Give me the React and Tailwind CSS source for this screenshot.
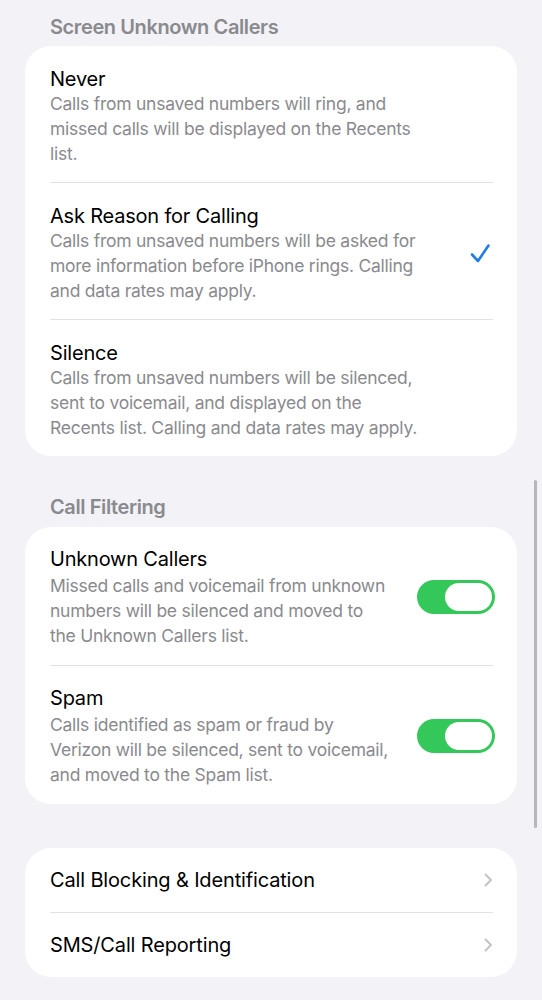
import React from 'react';

const FONT = { fontFamily: 'Inter, "Noto Sans", sans-serif' };

const screeningOptions = [
  {
    title: 'Never',
    lines: [
      'Calls from unsaved numbers will ring, and',
      'missed calls will be displayed on the Recents',
      'list.',
    ],
  },
  {
    title: 'Ask Reason for Calling',
    lines: [
      'Calls from unsaved numbers will be asked for',
      'more information before iPhone rings. Calling',
      'and data rates may apply.',
    ],
    selected: true,
  },
  {
    title: 'Silence',
    lines: [
      'Calls from unsaved numbers will be silenced,',
      'sent to voicemail, and displayed on the',
      'Recents list. Calling and data rates may apply.',
    ],
  },
];

const filterOptions = [
  {
    title: 'Unknown Callers',
    lines: [
      'Missed calls and voicemail from unknown',
      'numbers will be silenced and moved to',
      'the Unknown Callers list.',
    ],
  },
  {
    title: 'Spam',
    lines: [
      'Calls identified as spam or fraud by',
      'Verizon will be silenced, sent to voicemail,',
      'and moved to the Spam list.',
    ],
  },
];

const links = ['Call Blocking & Identification', 'SMS/Call Reporting'];

const SectionHeader = ({ children, className = '' }) => (
  <div
    className={`px-[50px] text-[20px] leading-[26px] tracking-[-0.4px] font-semibold text-[#8a8a8e] ${className}`}
  >
    {children}
  </div>
);

const Divider = () => <div className="ml-[25px] mr-[24px] h-px bg-[#e2e2e6]" />;

const Checkmark = () => (
  <svg width="22" height="22" viewBox="0 0 22 22" fill="none">
    <path
      d="M3 11.5 L9 18 L19.5 2.5"
      stroke="#1f7de6"
      strokeWidth="2.6"
      strokeLinecap="round"
      strokeLinejoin="round"
    />
  </svg>
);

const Toggle = () => (
  <div className="w-[78px] h-[34px] rounded-full bg-[#34c759] p-[3px] flex justify-end shrink-0">
    <div className="w-[47px] h-[28px] rounded-full bg-white" />
  </div>
);

const Chevron = () => (
  <svg width="10" height="16" viewBox="0 0 10 16" fill="none">
    <path
      d="M2.5 2.5 L8 8 L2.5 13.5"
      stroke="#c4c4c8"
      strokeWidth="2"
      strokeLinecap="round"
      strokeLinejoin="round"
    />
  </svg>
);

// pad / titleLead let the two groups keep their own row rhythm
const DetailRow = ({ title, lines, accessory, pad, titleLead }) => (
  <div className={`flex items-center pl-[25px] pr-[22px] ${pad}`}>
    <div className="flex-1">
      <div className={`text-[20px] tracking-[-0.2px] text-black ${titleLead}`}>{title}</div>
      {lines.map((line) => (
        <div
          key={line}
          className="text-[17.5px] leading-[25px] tracking-[-0.25px] text-[#8a8a8e] whitespace-nowrap"
        >
          {line}
        </div>
      ))}
    </div>
    {accessory}
  </div>
);

const LinkRow = ({ label }) => (
  <div className="h-[64px] flex items-center justify-between pl-[25px] pr-[24px]">
    <span className="text-[20px] tracking-[-0.15px] text-black">{label}</span>
    <Chevron />
  </div>
);

const Card = ({ children }) => (
  <div className="mx-[25px] bg-white rounded-[26px] overflow-hidden">{children}</div>
);

export default function App() {
  return (
    <div className="relative min-h-[1000px] bg-[#f2f2f7] pt-[14px] pb-[24px]" style={FONT}>
      <SectionHeader className="mb-[6px]">Screen Unknown Callers</SectionHeader>
      <Card>
        {screeningOptions.map((opt, i) => (
          <React.Fragment key={opt.title}>
            {i > 0 && <Divider />}
            <DetailRow
              title={opt.title}
              lines={opt.lines}
              pad="pt-[21px] pb-[16px]"
              titleLead="leading-[24px]"
              accessory={
                opt.selected ? (
                  <div className="mr-[4px]">
                    <Checkmark />
                  </div>
                ) : null
              }
            />
          </React.Fragment>
        ))}
      </Card>

      <SectionHeader className="mt-[38px] mb-[7px]">Call Filtering</SectionHeader>
      <Card>
        {filterOptions.map((opt, i) => (
          <React.Fragment key={opt.title}>
            {i > 0 && <Divider />}
            <DetailRow
              title={opt.title}
              lines={opt.lines}
              pad="pt-[18px] pb-[17px]"
              titleLead="leading-[28px]"
              accessory={<Toggle />}
            />
          </React.Fragment>
        ))}
      </Card>

      <div className="mt-[44px]">
        <Card>
          {links.map((label, i) => (
            <React.Fragment key={label}>
              {i > 0 && <Divider />}
              <LinkRow label={label} />
            </React.Fragment>
          ))}
        </Card>
      </div>

      {/* scroll indicator */}
      <div className="absolute left-[534px] top-[480px] w-[3px] h-[348px] rounded-full bg-[#b6b6bb]" />
    </div>
  );
}
